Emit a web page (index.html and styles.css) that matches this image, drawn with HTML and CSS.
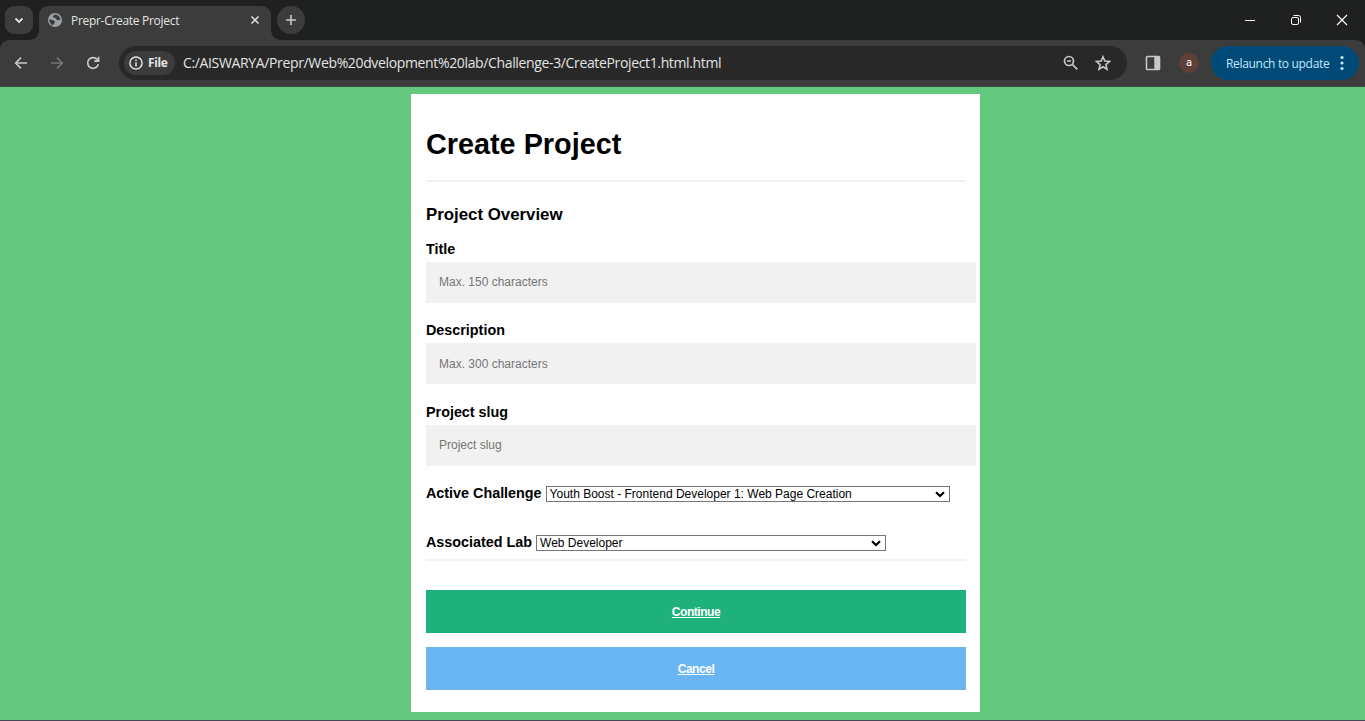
FILE: index.html
```html
<!DOCTYPE html>
<html lang="en">
<head>
<meta charset="utf-8">
<title>Prepr-Create Project</title>
<link rel="stylesheet" href="styles.css">
</head>
<body>
<div class="window">
  <header class="tabstrip">
    <div class="tab-search"><svg width="28" height="28" viewBox="0 0 28 28"><path d="M10.500 12.500l3.500 3.500 3.500-3.500" fill="none" stroke="#e3e3e3" stroke-width="1.800"/></svg></div>
    <div class="tab">
      <svg class="globe" width="14" height="14" viewBox="0 0 14 14"><circle cx="7" cy="7" r="7" fill="#9aa0a6"/><path d="M1.300 6.200C3 7 4.500 6.200 5.500 7.500c.8 1 1.800.6 1.500 2C6.700 11 5 10.500 5 12.500 2.500 11.500 1.200 9 1.300 6.200zM6.500 1.400c-.5 1.200-2 1-1.500 2.500.4 1.200 2 .4 2.800 1.300.8 1 .2 1.800 1.500 2 1.300.2 2.200-.7 3.300-.2C12.700 4.500 10 1.200 6.500 1.400z" fill="#3c3c3c"/></svg>
      <span class="tab-title">Prepr-Create Project</span>
      <svg class="tab-close" width="10" height="10" viewBox="0 0 10 10"><path d="M1.500 1.500l7 7M8.500 1.500l-7 7" stroke="#e3e3e3" stroke-width="1.500"/></svg>
    </div>
    <div class="new-tab"><svg width="28" height="28" viewBox="0 0 28 28"><path d="M14 9v10M9 14h10" stroke="#c7c7c7" stroke-width="1.600"/></svg></div>
    <div class="controls">
      <svg width="12" height="12" viewBox="0 0 12 12"><path d="M1 6.500h10" stroke="#fff"/></svg>
      <svg width="12" height="12" viewBox="0 0 12 12"><g fill="none" stroke="#fff"><rect x="1.500" y="3.500" width="7" height="7" rx="1.500"/><path d="M3.500 1.500H8.500a2 2 0 0 1 2 2V8.500"/></g></svg>
      <svg width="12" height="12" viewBox="0 0 12 12"><path d="M1 1l10 10M11 1L1 11" stroke="#fff" stroke-width="1.100"/></svg>
    </div>
  </header>

  <div class="toolbar">
    <nav class="nav">
      <svg width="14" height="14" viewBox="0 0 14 14"><path d="M13 7H2M7 1.700L1.700 7 7 12.300" fill="none" stroke="#c7c7c7" stroke-width="1.700"/></svg>
      <svg width="14" height="14" viewBox="0 0 14 14"><path d="M1 7h11M7 1.700L12.300 7 7 12.300" fill="none" stroke="#757575" stroke-width="1.700"/></svg>
      <svg width="14" height="14" viewBox="0 0 14 14"><path d="M12.300 8.200A5.400 5.400 0 1 1 11.300 3.600L12.500 5M12.600.8V5.200H8.200" fill="none" stroke="#c7c7c7" stroke-width="1.700"/></svg>
    </nav>
    <div class="omnibox">
      <div class="chip">
        <svg width="14" height="14" viewBox="0 0 14 14"><circle cx="7" cy="7" r="6.100" fill="none" stroke="#e3e3e3" stroke-width="1.500"/><path d="M7 6.200v4.200M7 3.500v1.600" stroke="#e3e3e3" stroke-width="1.500"/></svg>
        <span class="chip-text">File</span>
      </div>
      <span class="url">C:/AISWARYA/Prepr/Web%20dvelopment%20lab/Challenge-3/CreateProject1.html.html</span>
      <svg class="zoom" width="16" height="16" viewBox="0 0 16 16"><g fill="none" stroke="#c7c7c7" stroke-width="1.700"><circle cx="6" cy="6" r="4.500"/><path d="M9.300 9.300l5 5M4 6h4"/></g></svg>
      <svg class="star" width="16" height="16" viewBox="0 0 16 16"><path d="M8 1.800l1.800 4.300 4.700.4-3.600 3.100 1.100 4.600L8 11.700l-4 2.500 1.100-4.600L1.500 6.500l4.700-.4z" fill="none" stroke="#c7c7c7" stroke-width="1.600"/></svg>
    </div>
    <svg class="panel" width="16" height="16" viewBox="0 0 16 16"><rect x="1.500" y="1.500" width="13" height="13" rx=".8" fill="none" stroke="#c7c7c7" stroke-width="1.600"/><path d="M9.300 2H14v12H9.300z" fill="#c7c7c7"/></svg>
    <div class="avatar">a</div>
    <div class="update"><span class="update-text">Relaunch to update</span><svg width="4" height="16" viewBox="0 0 4 16"><g fill="#c2e7ff"><circle cx="2" cy="2.500" r="1.600"/><circle cx="2" cy="8" r="1.600"/><circle cx="2" cy="13.500" r="1.600"/></g></svg></div>
  </div>

  <main class="page">
    <form class="card">
      <h1>Create Project</h1>
      <hr>
      <h3>Project Overview</h3>
      <label class="field"><span>Title</span><input type="text" placeholder="Max. 150 characters"></label>
      <label class="field"><span>Description</span><input type="text" placeholder="Max. 300 characters"></label>
      <label class="field"><span>Project slug</span><input type="text" placeholder="Project slug"></label>
      <label class="choice challenge"><span>Active Challenge</span><div class="picker"><select><option>Youth Boost - Frontend Developer 1: Web Page Creation</option></select><svg class="arrow" width="10" height="7" viewBox="0 0 10 7"><path d="M1 1.200l4 3.800 4-3.800" fill="none" stroke="#000" stroke-width="2.200"/></svg></div></label>
      <label class="choice lab"><span>Associated Lab</span><div class="picker"><select><option>Web Developer</option></select><svg class="arrow" width="10" height="7" viewBox="0 0 10 7"><path d="M1 1.200l4 3.800 4-3.800" fill="none" stroke="#000" stroke-width="2.200"/></svg></div></label>
      <hr>
      <a class="btn continue" href="#">Continue</a>
      <a class="btn cancel" href="#">Cancel</a>
    </form>
  </main>
</div>
</body>
</html>
```
FILE: styles.css
```css
* { box-sizing: border-box; }
body { margin: 0; font-family: "Liberation Sans", Arial, sans-serif; }
svg { display: block; flex: none; }
.window { width: 1365px; height: 721px; overflow: hidden; display: flex; flex-direction: column; background: #1f2120; }

/* Tab strip */
.tabstrip { height: 40px; display: flex; align-items: flex-start; padding: 6px 17px 0 5px; font-family: "Open Sans", sans-serif; }
.tab-search { width: 28px; height: 28px; border-radius: 9px; background: #3c3c3c; margin-right: 6px; }
.tab { position: relative; width: 232px; height: 34px; border-radius: 9px 9px 0 0; background: #3c3c3c; display: flex; align-items: center; padding: 0 11px 6px 9px; }
.tab::before, .tab::after { content: ""; position: absolute; bottom: 0; width: 9px; height: 9px; }
.tab::before { left: -9px; background: radial-gradient(circle at 0 0, transparent 8.500px, #3c3c3c 9px); }
.tab::after { right: -9px; background: radial-gradient(circle at 100% 0, transparent 8.500px, #3c3c3c 9px); }
.tab-title { flex: 1; margin-left: 9px; font-size: 12px; letter-spacing: -.3px; color: #e3e3e3; white-space: nowrap; }
.new-tab { width: 28px; height: 28px; border-radius: 50%; background: #3c3c3c; margin-left: 6px; }
.controls { margin-left: auto; display: flex; gap: 34px; padding-top: 8px; }

/* Toolbar */
.toolbar { height: 47px; background: #3c3c3c; border-bottom: 1px solid #4a4a4a; border-radius: 9px 9px 0 0; display: flex; align-items: center; padding: 0 6px 0 14px; font-family: "Open Sans", sans-serif; }
.nav { display: flex; gap: 22px; }
.omnibox { width: 1008px; height: 34px; border-radius: 17px; background: #282828; margin-left: 19px; display: flex; align-items: center; padding: 0 16px 0 5px; }
.chip { width: 51px; height: 24px; border-radius: 12px; background: #3c3c3c; display: flex; align-items: center; padding-left: 5px; gap: 5px; }
.chip-text { font-size: 12px; font-weight: 700; color: #e3e3e3; letter-spacing: -.4px; position: relative; top: -1px; }
.url { flex: 1; margin: -1px 0 0 8px; font-size: 14px; letter-spacing: -.355px; color: #e3e3e3; white-space: nowrap; }
.star { margin-left: 16px; }
.panel { margin-left: 18px; }
.avatar { width: 20px; height: 20px; border-radius: 50%; background: #5d4037; margin-left: 18px; color: #fff; font: 11px/20px Roboto, sans-serif; text-align: center; }
.update { width: 148px; height: 34px; border-radius: 17px; background: #004a77; margin-left: 12px; display: flex; align-items: center; justify-content: space-between; padding: 0 15px; color: #c2e7ff; font-size: 12px; }
.update-text { letter-spacing: -.32px; white-space: nowrap; }

/* Page */
.page { height: 634px; background: #64c87e; border-bottom: 1px solid #454655; padding: 7px 385px 8px 411px; }
.card { height: 618px; background: #fff; padding: 34px 14px 0 15px; }
h1 { margin: 0; font-size: 28.800px; line-height: 33px; }
hr { margin: 0; border: 0; height: 2px; background: #f1f1f1; }
h1 + hr { margin-top: 19px; }
h3 { margin: 23px 0 16.900px; font-size: 16.840px; line-height: 19px; }
.field { display: block; height: 81.500px; }
.field span, .choice span { font-size: 14.350px; font-weight: bold; line-height: 17px; }
.field span { display: block; margin-bottom: 4px; }
.field input { display: block; width: 550px; height: 41px; border: 0; padding: 0 13px; background: #f1f1f1; font: 12px "Liberation Sans", Arial, sans-serif; }
.field input::placeholder { color: #757575; }
.choice { display: flex; align-items: center; height: 17px; gap: 4px; white-space: nowrap; }
.challenge { margin-top: -.4px; }
.picker { position: relative; height: 16px; margin-top: 1px; }
.picker select { display: block; width: 100%; height: 16px; margin: 0; padding: 0 3px; appearance: none; border: 1px solid #767676; border-radius: 0; background: #fff; color: #000; font: 12px/14px "Liberation Sans", Arial, sans-serif; }
.arrow { position: absolute; right: 5px; top: 5px; pointer-events: none; }
.challenge .picker { width: 404px; }
.lab { margin: 32px 0 8px; }
.lab .picker { width: 350px; }
.btn { display: block; height: 43px; font-size: 12px; font-weight: bold; letter-spacing: -.45px; line-height: 44px; text-align: center; color: #fff; text-decoration: underline; }
.continue { margin-top: 29px; background: #1eb17b; }
.cancel { margin-top: 14px; background: #69b5f2; }
```
